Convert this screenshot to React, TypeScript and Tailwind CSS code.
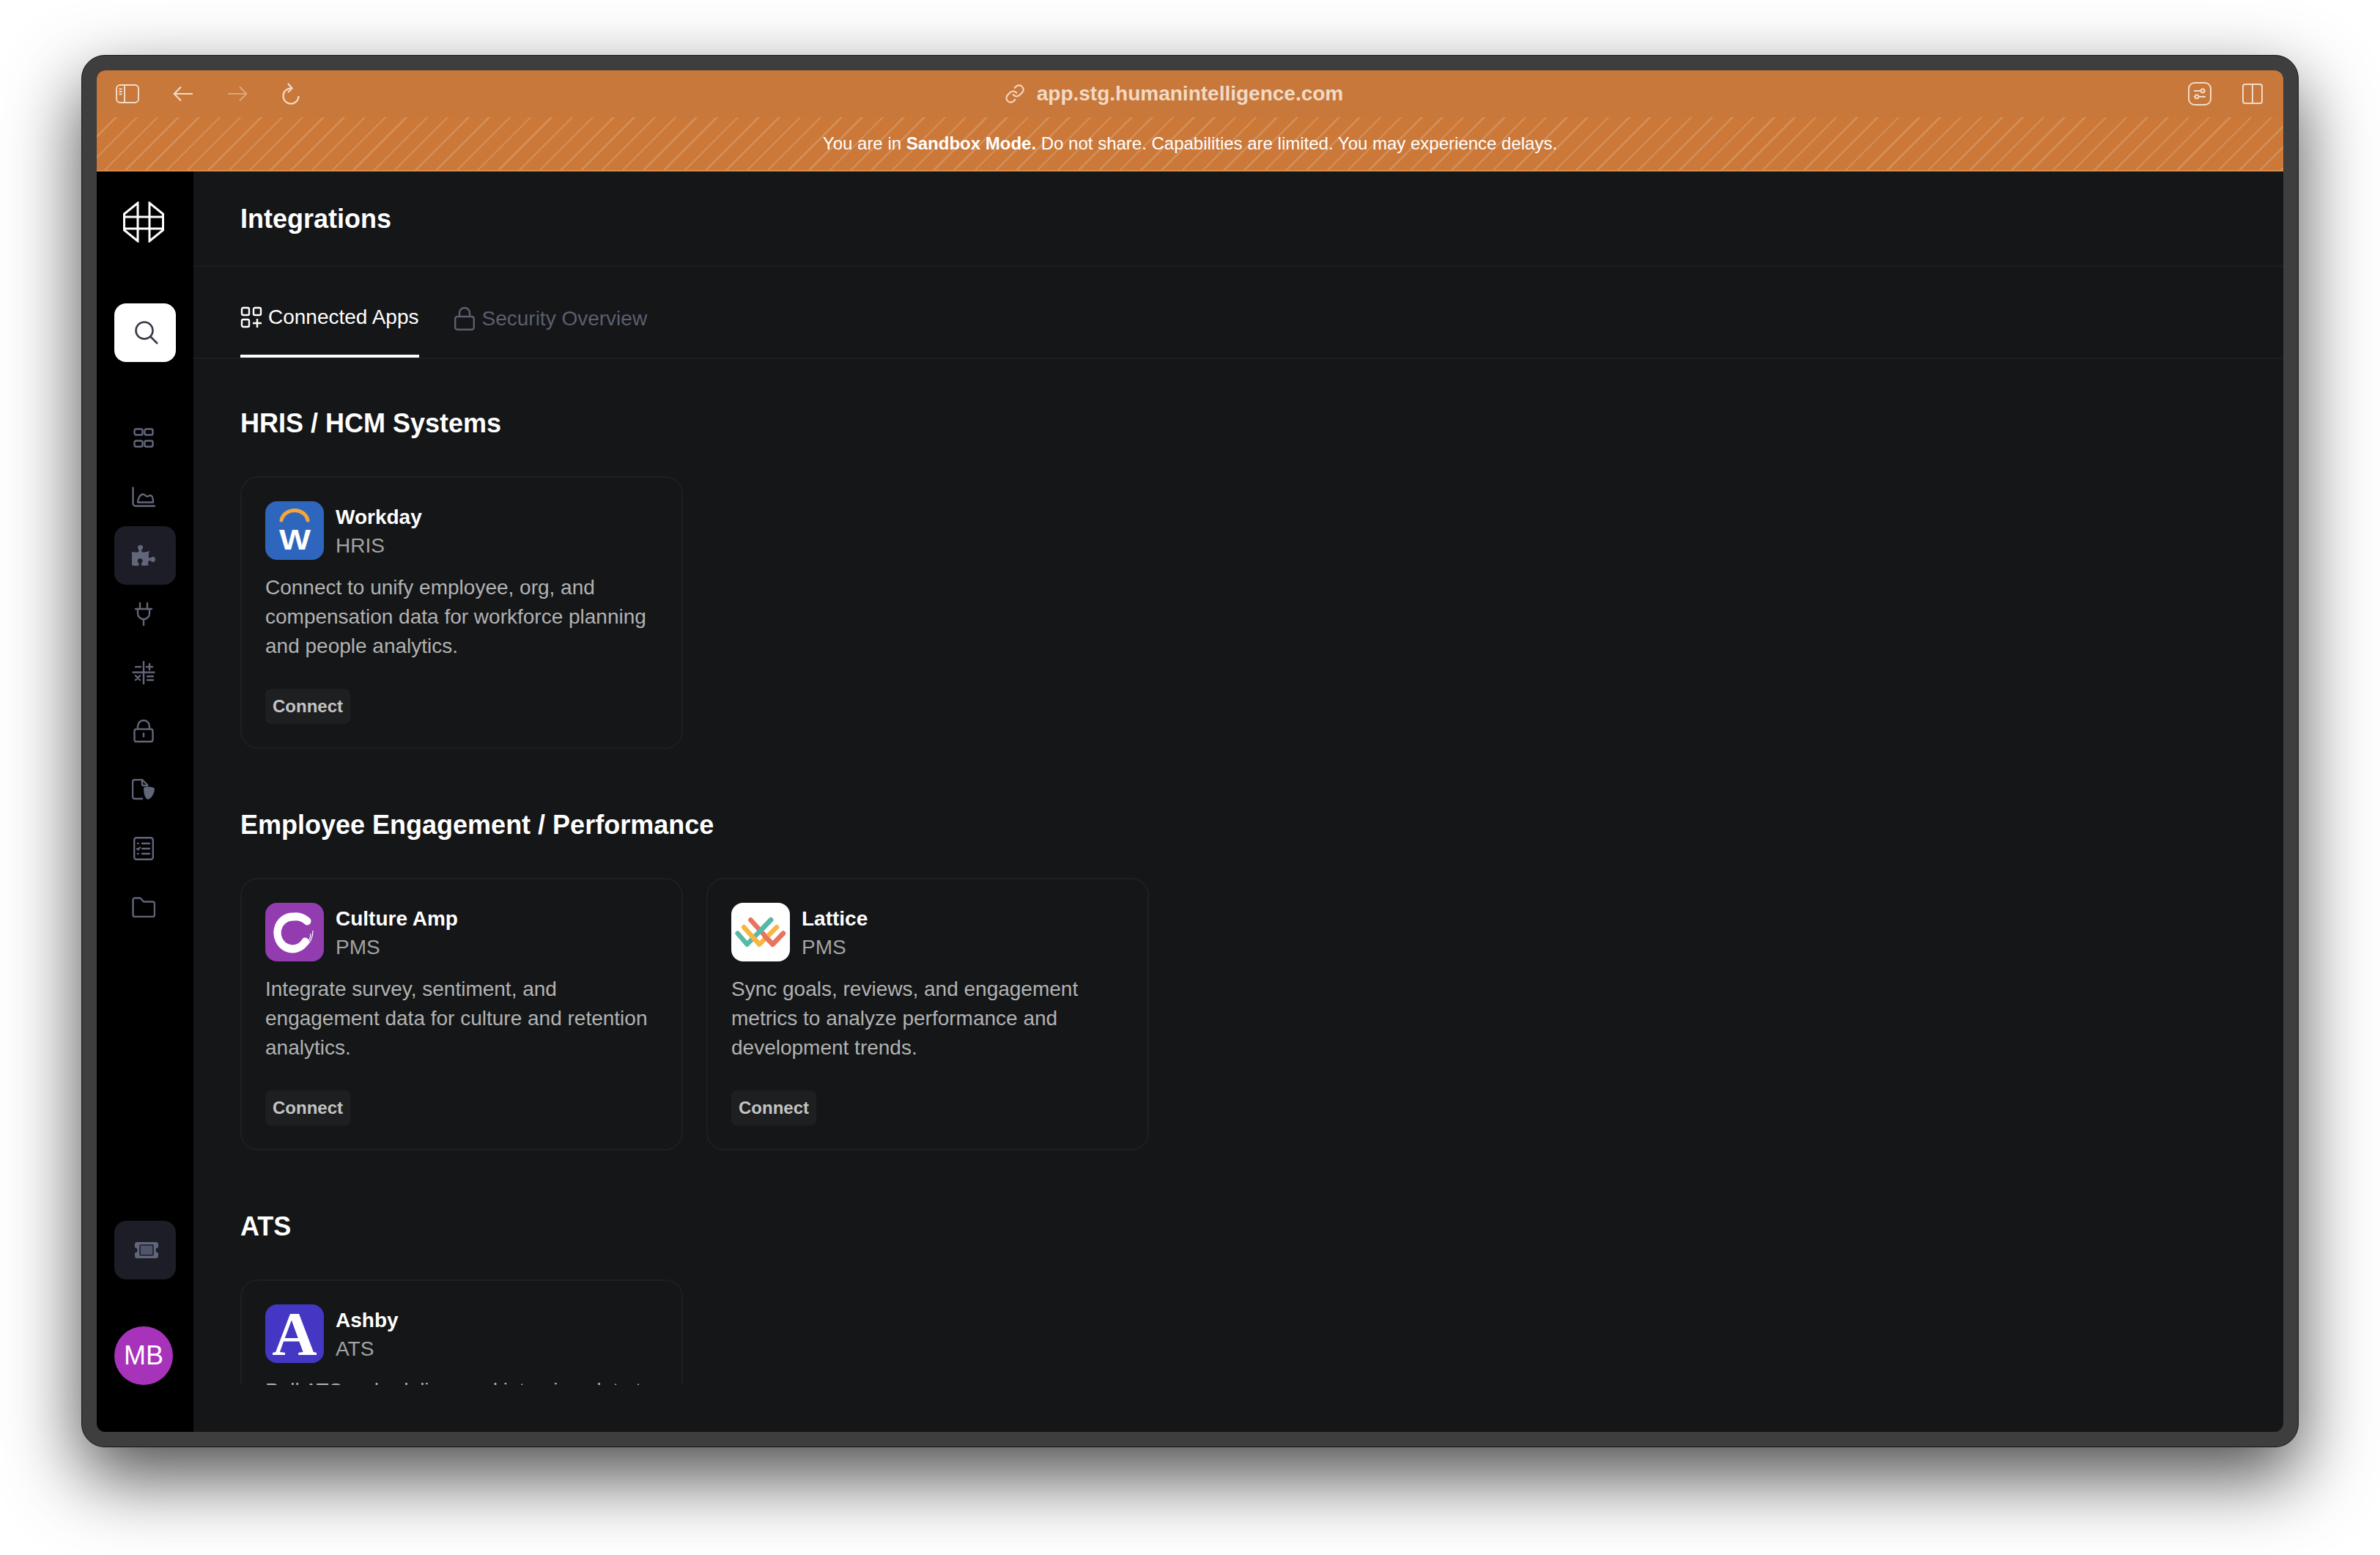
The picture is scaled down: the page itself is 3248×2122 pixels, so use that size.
import { Link } from 'lucide-react';
import { FaPuzzlePiece } from 'react-icons/fa';

const chrome = '#f2dac6';
const navGray = '#62667a';

// browser toolbar icons
function SidebarToggle() {
  return (
    <svg width="32" height="26" viewBox="0 0 32 26" fill="none" stroke={chrome} strokeWidth="2">
      <rect x="1" y="1" width="30" height="24" rx="5" />
      <path d="M12 1v24M4.5 6.5h4M4.5 10h4M4.5 13.5h4" />
    </svg>
  );
}

function Arrow({ flip, color }: { flip?: boolean; color: string }) {
  return (
    <svg width="28" height="22" viewBox="0 0 28 22" fill="none" stroke={color} strokeWidth="2.2" className={flip ? '-scale-x-100' : ''}>
      <path d="M27 11H2M11 1.5 1.8 11l9.2 9.5" />
    </svg>
  );
}

function Reload() {
  return (
    <svg width="26" height="30" viewBox="0 0 26 30" fill="none" stroke={chrome} strokeWidth="2.2">
      <path d="M13 7.5A10.5 10.5 0 1 0 23.5 18" />
      <path d="M9 1l5.5 6.5L9 13" />
    </svg>
  );
}

function ExtensionIcon() {
  return (
    <svg width="32" height="32" viewBox="0 0 32 32" fill="none" stroke={chrome} strokeWidth="2">
      <rect x="1" y="1" width="30" height="30" rx="8" />
      <path d="M8 12h10M22 12h2M8 20h2M14 20h10" />
      <circle cx="20" cy="12" r="2.4" />
      <circle cx="12" cy="20" r="2.4" />
    </svg>
  );
}

function SplitIcon() {
  return (
    <svg width="28" height="28" viewBox="0 0 28 28" fill="none" stroke={chrome} strokeWidth="2">
      <rect x="1" y="1" width="26" height="26" rx="3" />
      <path d="M14 1v26" />
    </svg>
  );
}

// sidebar icons
function Logo() {
  return (
    <svg width="56" height="56" viewBox="0 0 56 56" fill="none" stroke="#fff" strokeWidth="3">
      <path d="M20 2v52L1.5 39V17L20 2ZM36 2v52l18.5-15V17L36 2ZM1.5 21h53M1.5 37h53" />
    </svg>
  );
}

function SearchIcon() {
  return (
    <svg width="32" height="32" viewBox="0 0 32 32" fill="none" stroke="#3a3a4a" strokeWidth="2.6">
      <circle cx="13" cy="13" r="11.5" />
      <path d="M21.5 21.5 31 31" />
    </svg>
  );
}

function NavSvg({ d, w = 32, h = 32 }: { d: string; w?: number; h?: number }) {
  return (
    <svg width={w} height={h} viewBox={`0 0 ${w} ${h}`} fill="none" stroke={navGray} strokeWidth="2.4" strokeLinecap="round" strokeLinejoin="round">
      <path d={d} />
    </svg>
  );
}

function FileShield() {
  return (
    <svg width="32" height="30" viewBox="0 0 32 30" fill="none" stroke={navGray} strokeWidth="2.4" strokeLinejoin="round">
      <path d="M15 27H4a3 3 0 0 1-3-3V4a3 3 0 0 1 3-3h10l8 8" />
      <path d="M16 12c5-2 10-2 15 1 0 7-5 14-9 15-3-1-6-5-6-16Z" fill={navGray} stroke="none" />
      <path d="M14 1v6a2 2 0 0 0 2 2h6" />
    </svg>
  );
}

function ListIcon() {
  return (
    <svg width="28" height="32" viewBox="0 0 28 32" fill="none" stroke={navGray} strokeWidth="2.4" strokeLinecap="round">
      <rect x="1.2" y="1.2" width="25.6" height="29.6" rx="3" />
      <path d="M12 9h10M12 16h10M12 23h10M6 9h.5M6 23h.5M5 16l1.5 1.5L9 14.5" />
    </svg>
  );
}

function TicketIcon() {
  return (
    <svg width="32" height="22" viewBox="0 0 32 22" fill={navGray}>
      <path d="M3 0h26a3 3 0 0 1 3 3v4.5a3.5 3.5 0 0 0 0 7V19a3 3 0 0 1-3 3H3a3 3 0 0 1-3-3v-4.5a3.5 3.5 0 0 0 0-7V3a3 3 0 0 1 3-3Z" />
      <rect x="7" y="4" width="18" height="14" rx="1" fill="#50556a" stroke="#1c1d26" strokeWidth="1.6" />
    </svg>
  );
}

const navIcons = [
  <NavSvg key="grid" w={28} h={28} d="M3.5 1.5h7a2 2 0 0 1 2 2v4a2 2 0 0 1-2 2h-7a2 2 0 0 1-2-2v-4a2 2 0 0 1 2-2ZM17.5 1.5h7a2 2 0 0 1 2 2v4a2 2 0 0 1-2 2h-7a2 2 0 0 1-2-2v-4a2 2 0 0 1 2-2ZM3.5 17.5h7a2 2 0 0 1 2 2v4a2 2 0 0 1-2 2h-7a2 2 0 0 1-2-2v-4a2 2 0 0 1 2-2ZM17.5 17.5h7a2 2 0 0 1 2 2v4a2 2 0 0 1-2 2h-7a2 2 0 0 1-2-2v-4a2 2 0 0 1 2-2Z" />,
  <NavSvg key="chart" h={28} d="M1.5 1.5V23a3.5 3.5 0 0 0 3.5 3.5h26M8 21.5c0-5 3.5-11 7-11 3 0 3.5 3 6 3 1.5 0 2.5-1.5 4-1.5 2.5 0 4 4 4 9.5H8Z" />,
  <FaPuzzlePiece key="puzzle" size={32} color={navGray} />,
  <NavSvg key="plug" w={26} h={34} d="M2 10h22M8 2v8M18 2v8M5 10v6a8 8 0 0 0 16 0v-6M13 24v8" />,
  <NavSvg key="calc" h={32} d="M16 1v30M1.5 15.5h29M5 8h7M20 8h8M24 4v8M5 20l6 6M11 20l-6 6M21 21h8M21 26h8" />,
  <NavSvg key="lock" w={28} h={32} d="M4 13h20a2.5 2.5 0 0 1 2.5 2.5v12a2.5 2.5 0 0 1-2.5 2.5H4a2.5 2.5 0 0 1-2.5-2.5v-12A2.5 2.5 0 0 1 4 13ZM6 13v-4a8 8 0 0 1 16 0v4M14 19v4" />,
  <FileShield key="file" />,
  <ListIcon key="list" />,
  <NavSvg key="folder" h={28} d="M4 1.5h7.5l4.5 5h12.5a2.5 2.5 0 0 1 2.5 2.5v15.5a2.5 2.5 0 0 1-2.5 2.5h-24.5a2.5 2.5 0 0 1-2.5-2.5V4a2.5 2.5 0 0 1 2.5-2.5Z" />,
];

// app logos
function WorkdayLogo() {
  return (
    <svg width="80" height="80" viewBox="0 0 80 80" className="rounded-2xl bg-[#2f66bd]">
      <path d="M22 26C26 8 54 8 58 26" fill="none" stroke="#f5a637" strokeWidth="5" strokeLinecap="round" />
      <text x="19" y="66" fontSize="39" fill="#fff" textLength="43" lengthAdjust="spacingAndGlyphs" fontFamily="Liberation Sans, sans-serif" fontWeight="700">W</text>
    </svg>
  );
}

function CultureAmpLogo() {
  return (
    <svg width="80" height="80" viewBox="0 0 80 80" className="rounded-2xl bg-[#923cb0]">
      <path d="M61 24C55 19 48 17 41 18A22 22 0 1 0 58 52" fill="none" stroke="#fff" strokeWidth="11" strokeLinecap="round" transform="translate(0 1) scale(0.94 1)" />
      <path d="M62 42c0 7-4 13-9 17M65 38c0 8-3 15-8 20" fill="none" stroke="#fff" strokeWidth="1.2" />
      <circle cx="41" cy="40" r="11" fill="#923cb0" />
    </svg>
  );
}

function LatticeLogo() {
  return (
    <svg width="80" height="80" viewBox="0 0 80 80" className="rounded-2xl bg-white" fill="none" strokeWidth="6.5" strokeLinecap="round" strokeLinejoin="round">
      <path d="M26.3 23.3 56.5 56.7 70.8 41.7" stroke="#e8745f" />
      <path d="M8.6 41.7 21.5 56.7 54 23.3" stroke="#56b8a6" />
      <path d="M17.2 33.3 38.3 56.7 62 33.3" stroke="#f5b642" />
      <path d="M40 38 54 23.3" stroke="#56b8a6" />
      <path d="M46 46 56.5 56.7 70.8 41.7" stroke="#e8745f" />
    </svg>
  );
}

function AshbyLogo() {
  return (
    <div className="w-20 h-20 rounded-2xl bg-[#4337c4] flex items-center justify-center font-['Liberation_Serif',serif] font-bold text-[85px] leading-none text-white">
      A
    </div>
  );
}

type AppCard = { name: string; kind: string; logo: React.ReactNode; text: string };

const sections: { title: string; cards: AppCard[] }[] = [
  {
    title: 'HRIS / HCM Systems',
    cards: [
      { name: 'Workday', kind: 'HRIS', logo: <WorkdayLogo />, text: 'Connect to unify employee, org, and compensation data for workforce planning and people analytics.' },
    ],
  },
  {
    title: 'Employee Engagement / Performance',
    cards: [
      { name: 'Culture Amp', kind: 'PMS', logo: <CultureAmpLogo />, text: 'Integrate survey, sentiment, and engagement data for culture and retention analytics.' },
      { name: 'Lattice', kind: 'PMS', logo: <LatticeLogo />, text: 'Sync goals, reviews, and engagement metrics to analyze performance and development trends.' },
    ],
  },
  {
    title: 'ATS',
    cards: [
      { name: 'Ashby', kind: 'ATS', logo: <AshbyLogo />, text: 'Pull ATS, scheduling, and interview data to analyze hiring funnels and recruiter performance.' },
    ],
  },
];

function Card({ card }: { card: AppCard }) {
  return (
    <div className="rounded-3xl border-2 border-[#1d1f22] p-8">
      <div className="flex gap-4">
        <div className="shrink-0 h-20">{card.logo}</div>
        <div className="pt-[2px] text-[28px] leading-[39px]">
          <div className="font-semibold text-white">{card.name}</div>
          <div className="text-[#a3a3a3]">{card.kind}</div>
        </div>
      </div>
      <p className="mt-[18px] text-[28px] leading-10 text-[#b2b2b2]">{card.text}</p>
      <button className="mt-[38px] block h-12 w-[116px] rounded-lg bg-[#1e1f21] text-center text-2xl font-semibold text-[#c4c4c4]">
        Connect
      </button>
    </div>
  );
}

export default function App() {
  return (
    <div className="w-[3248px] h-[2122px] overflow-hidden bg-white pl-[111px] pt-[75px] font-['Liberation_Sans','Noto_Sans',sans-serif]">
      {/* window frame */}
      <div className="w-[3026px] h-[1900px] rounded-[32px] border border-[#151515] bg-[#3e3e3e] p-5 shadow-[0_40px_100px_rgba(0,0,0,0.7)]">
        <div className="flex h-full flex-col overflow-hidden rounded-xl bg-[#141618]">
          {/* browser bar */}
          <div className="grid h-16 shrink-0 grid-cols-[1fr_auto_1fr] items-center bg-[#c8783a]">
            <div className="flex items-center gap-[46px] pl-[26px]">
              <SidebarToggle />
              <Arrow color={chrome} />
              <Arrow flip color="#dfa476" />
              <Reload />
            </div>
            <div className="mr-[44px] flex items-center gap-4 text-[28px] font-semibold text-[#f2dac6]">
              <Link size={28} color={chrome} strokeWidth={1.8} />
              <span>app.stg.humanintelligence.com</span>
            </div>
            <div className="flex items-center justify-end gap-[42px] pr-7">
              <ExtensionIcon />
              <SplitIcon />
            </div>
          </div>

          {/* sandbox banner */}
          <div className="flex h-[74px] shrink-0 items-center justify-center border-b-2 border-[#d98d4f] bg-[#cb7838] bg-[repeating-linear-gradient(135deg,transparent_0,transparent_17.5px,rgba(255,255,255,0.16)_17.5px,rgba(255,255,255,0.16)_20px)] text-2xl text-white">
            <span>
              You are in <b>Sandbox Mode.</b> Do not share. Capabilities are limited. You may experience delays.
            </span>
          </div>

          <div className="flex min-h-0 flex-1">
            {/* sidebar */}
            <aside className="flex w-[132px] shrink-0 flex-col bg-black px-6">
              <div className="flex h-[180px] shrink-0 items-start justify-start pl-3 pt-[41px]">
                <Logo />
              </div>
              <button className="flex h-20 w-[84px] shrink-0 items-center justify-center rounded-2xl bg-white pl-1">
                <SearchIcon />
              </button>
              <nav className="mt-16 flex flex-col">
                {navIcons.map((icon, i) => (
                  <div key={i} className={`flex h-20 w-[84px] items-center justify-center rounded-2xl pr-1 ${i === 2 ? 'bg-[#1c1d26]' : ''}`}>
                    {icon}
                  </div>
                ))}
              </nav>
              <div className="mt-auto mb-16 flex flex-col gap-16">
                <button className="flex h-20 w-[84px] items-center justify-center rounded-2xl bg-[#1c1d26] pl-1">
                  <TicketIcon />
                </button>
                <div className="flex h-20 w-20 items-center justify-center rounded-full bg-[#a733bb] text-[36px] text-white">MB</div>
              </div>
            </aside>

            {/* main */}
            <main className="flex min-w-0 flex-1 flex-col">
              <header className="flex h-[130px] shrink-0 items-center border-b-2 border-[#1b1d1f] pl-16 pt-[2px]">
                <h1 className="text-[36px] font-semibold text-white">Integrations</h1>
              </header>
              <div className="flex h-[126px] shrink-0 gap-12 border-b-2 border-[#1b1d1f] pl-16">
                <div className="flex items-center gap-2 border-b-4 border-white pt-[18px] text-[28px] font-medium text-white">
                  <svg width="30" height="30" viewBox="0 0 30 30" fill="none" stroke="#fff" strokeWidth="2.4">
                    <rect x="2" y="2" width="10" height="10" rx="2" />
                    <rect x="18" y="2" width="10" height="10" rx="2" />
                    <rect x="2" y="18" width="10" height="10" rx="2" />
                    <path d="M23 17v12M17 23h12" />
                  </svg>
                  Connected Apps
                </div>
                <div className="flex items-center gap-[10px] border-b-4 border-transparent pt-[22px] text-[28px] text-[#5c5f6e]">
                  <svg width="28" height="32" viewBox="0 0 28 32" fill="none" stroke="#5c5f6e" strokeWidth="2.4">
                    <rect x="1.2" y="13" width="25.6" height="17.8" rx="3" />
                    <path d="M7 13V8a7 7 0 0 1 14 0v5" />
                  </svg>
                  Security Overview
                </div>
              </div>
              <div className="mb-16 min-h-0 flex-1 overflow-hidden pl-16 pt-16">
                <div className="flex flex-col gap-20">
                  {sections.map((s) => (
                    <section key={s.title}>
                      <h2 className="mb-12 text-[36px] leading-[48px] font-semibold text-white">{s.title}</h2>
                      <div className="grid grid-cols-[604px_604px] gap-8">
                        {s.cards.map((c) => (
                          <Card key={c.name} card={c} />
                        ))}
                      </div>
                    </section>
                  ))}
                </div>
              </div>
            </main>
          </div>
        </div>
      </div>
    </div>
  );
}
